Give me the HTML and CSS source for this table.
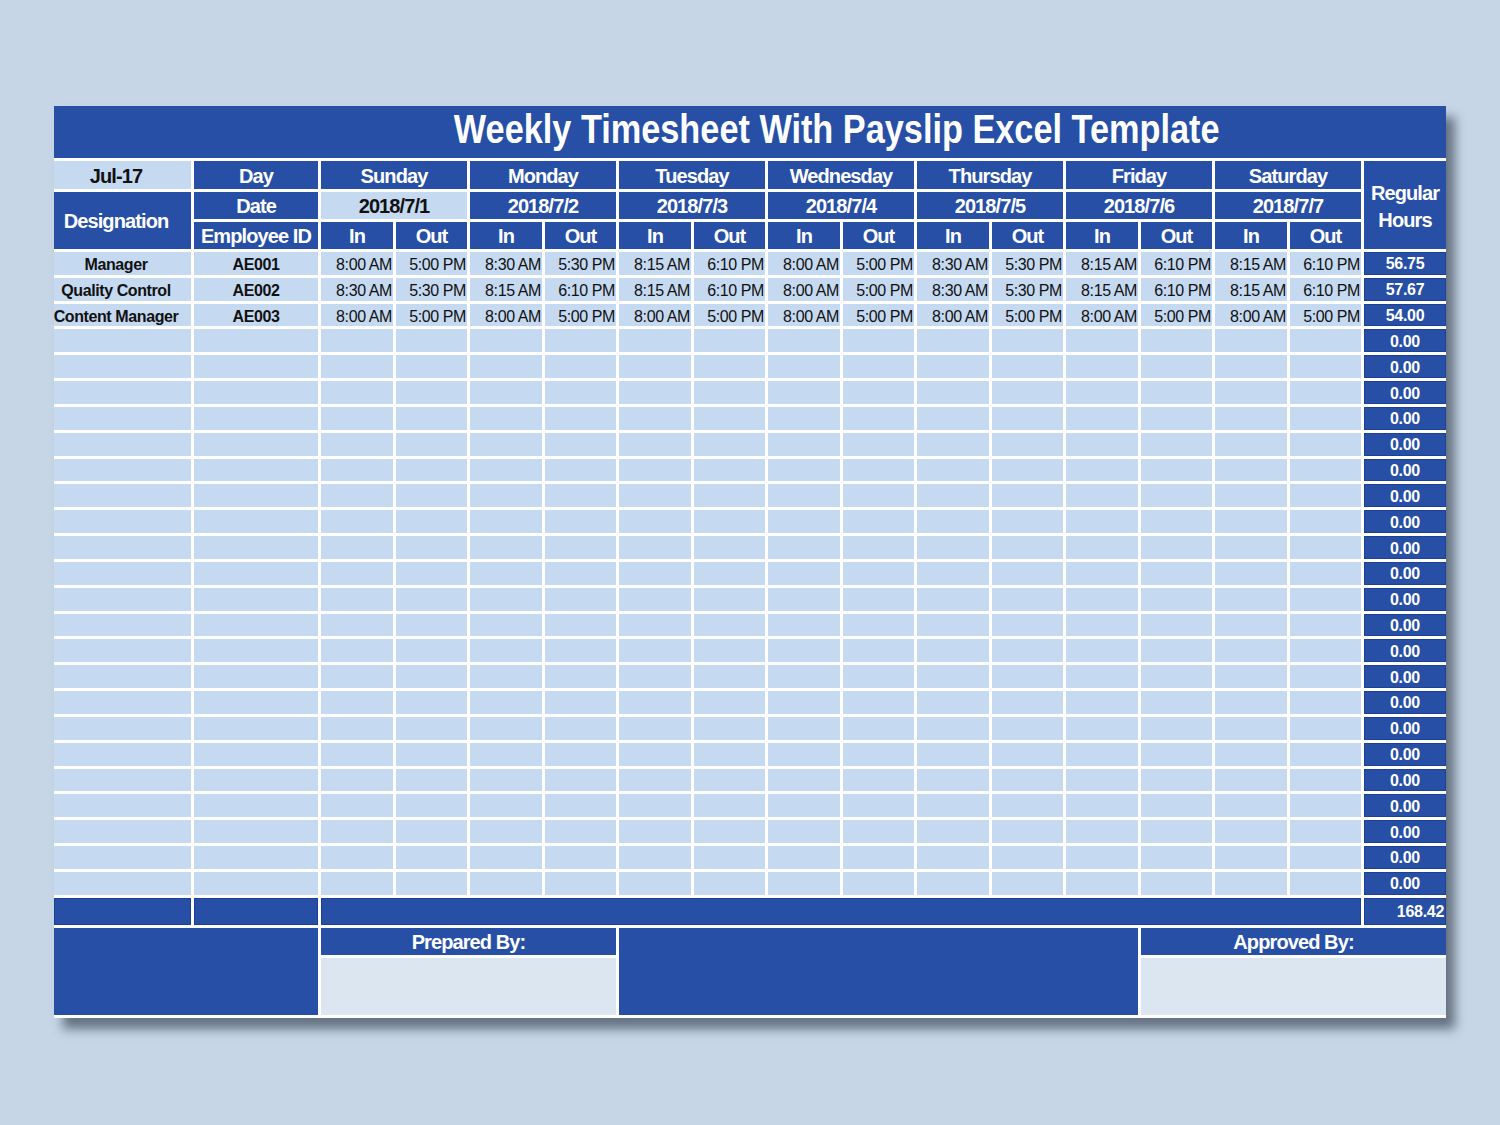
FILE: index.html
```html
<!DOCTYPE html>
<html lang="en">
<head>
<meta charset="utf-8">
<title>Weekly Timesheet With Payslip Excel Template</title>
<link rel="stylesheet" href="styles.css">
</head>
<body>
<div class="sheet">
  <div class="title"><span class="title-text">Weekly Timesheet With Payslip Excel Template</span></div>

  <div class="c lt hd colA">Jul-17</div>
  <div class="c dk hd">Day</div>
  <div class="c dk hd span2">Sunday</div>
  <div class="c dk hd span2">Monday</div>
  <div class="c dk hd span2">Tuesday</div>
  <div class="c dk hd span2">Wednesday</div>
  <div class="c dk hd span2">Thursday</div>
  <div class="c dk hd span2">Friday</div>
  <div class="c dk hd span2">Saturday</div>
  <div class="c dk hd rhead">Regular<br>Hours</div>

  <div class="c dk hd colA desig">Designation</div>
  <div class="c dk hd">Date</div>
  <div class="c lt hd span2">2018/7/1</div>
  <div class="c dk hd span2">2018/7/2</div>
  <div class="c dk hd span2">2018/7/3</div>
  <div class="c dk hd span2">2018/7/4</div>
  <div class="c dk hd span2">2018/7/5</div>
  <div class="c dk hd span2">2018/7/6</div>
  <div class="c dk hd span2">2018/7/7</div>

  <div class="c dk hd">Employee ID</div>
  <div class="c dk hd">In</div><div class="c dk hd">Out</div>
  <div class="c dk hd">In</div><div class="c dk hd">Out</div>
  <div class="c dk hd">In</div><div class="c dk hd">Out</div>
  <div class="c dk hd">In</div><div class="c dk hd">Out</div>
  <div class="c dk hd">In</div><div class="c dk hd">Out</div>
  <div class="c dk hd">In</div><div class="c dk hd">Out</div>
  <div class="c dk hd">In</div><div class="c dk hd">Out</div>

  <div class="c lt nm colA">Manager</div><div class="c lt nm">AE001</div>
  <div class="c lt tm">8:00 AM</div><div class="c lt tm">5:00 PM</div>
  <div class="c lt tm">8:30 AM</div><div class="c lt tm">5:30 PM</div>
  <div class="c lt tm">8:15 AM</div><div class="c lt tm">6:10 PM</div>
  <div class="c lt tm">8:00 AM</div><div class="c lt tm">5:00 PM</div>
  <div class="c lt tm">8:30 AM</div><div class="c lt tm">5:30 PM</div>
  <div class="c lt tm">8:15 AM</div><div class="c lt tm">6:10 PM</div>
  <div class="c lt tm">8:15 AM</div><div class="c lt tm">6:10 PM</div>
  <div class="c dk rh">56.75</div>

  <div class="c lt nm colA">Quality Control</div><div class="c lt nm">AE002</div>
  <div class="c lt tm">8:30 AM</div><div class="c lt tm">5:30 PM</div>
  <div class="c lt tm">8:15 AM</div><div class="c lt tm">6:10 PM</div>
  <div class="c lt tm">8:15 AM</div><div class="c lt tm">6:10 PM</div>
  <div class="c lt tm">8:00 AM</div><div class="c lt tm">5:00 PM</div>
  <div class="c lt tm">8:30 AM</div><div class="c lt tm">5:30 PM</div>
  <div class="c lt tm">8:15 AM</div><div class="c lt tm">6:10 PM</div>
  <div class="c lt tm">8:15 AM</div><div class="c lt tm">6:10 PM</div>
  <div class="c dk rh">57.67</div>

  <div class="c lt nm colA">Content Manager</div><div class="c lt nm">AE003</div>
  <div class="c lt tm">8:00 AM</div><div class="c lt tm">5:00 PM</div>
  <div class="c lt tm">8:00 AM</div><div class="c lt tm">5:00 PM</div>
  <div class="c lt tm">8:00 AM</div><div class="c lt tm">5:00 PM</div>
  <div class="c lt tm">8:00 AM</div><div class="c lt tm">5:00 PM</div>
  <div class="c lt tm">8:00 AM</div><div class="c lt tm">5:00 PM</div>
  <div class="c lt tm">8:00 AM</div><div class="c lt tm">5:00 PM</div>
  <div class="c lt tm">8:00 AM</div><div class="c lt tm">5:00 PM</div>
  <div class="c dk rh">54.00</div>

  <div class="c lt"></div><div class="c lt"></div><div class="c lt"></div><div class="c lt"></div><div class="c lt"></div><div class="c lt"></div><div class="c lt"></div><div class="c lt"></div><div class="c lt"></div><div class="c lt"></div><div class="c lt"></div><div class="c lt"></div><div class="c lt"></div><div class="c lt"></div><div class="c lt"></div><div class="c lt"></div><div class="c dk rh">0.00</div>
  <div class="c lt"></div><div class="c lt"></div><div class="c lt"></div><div class="c lt"></div><div class="c lt"></div><div class="c lt"></div><div class="c lt"></div><div class="c lt"></div><div class="c lt"></div><div class="c lt"></div><div class="c lt"></div><div class="c lt"></div><div class="c lt"></div><div class="c lt"></div><div class="c lt"></div><div class="c lt"></div><div class="c dk rh">0.00</div>
  <div class="c lt"></div><div class="c lt"></div><div class="c lt"></div><div class="c lt"></div><div class="c lt"></div><div class="c lt"></div><div class="c lt"></div><div class="c lt"></div><div class="c lt"></div><div class="c lt"></div><div class="c lt"></div><div class="c lt"></div><div class="c lt"></div><div class="c lt"></div><div class="c lt"></div><div class="c lt"></div><div class="c dk rh">0.00</div>
  <div class="c lt"></div><div class="c lt"></div><div class="c lt"></div><div class="c lt"></div><div class="c lt"></div><div class="c lt"></div><div class="c lt"></div><div class="c lt"></div><div class="c lt"></div><div class="c lt"></div><div class="c lt"></div><div class="c lt"></div><div class="c lt"></div><div class="c lt"></div><div class="c lt"></div><div class="c lt"></div><div class="c dk rh">0.00</div>
  <div class="c lt"></div><div class="c lt"></div><div class="c lt"></div><div class="c lt"></div><div class="c lt"></div><div class="c lt"></div><div class="c lt"></div><div class="c lt"></div><div class="c lt"></div><div class="c lt"></div><div class="c lt"></div><div class="c lt"></div><div class="c lt"></div><div class="c lt"></div><div class="c lt"></div><div class="c lt"></div><div class="c dk rh">0.00</div>
  <div class="c lt"></div><div class="c lt"></div><div class="c lt"></div><div class="c lt"></div><div class="c lt"></div><div class="c lt"></div><div class="c lt"></div><div class="c lt"></div><div class="c lt"></div><div class="c lt"></div><div class="c lt"></div><div class="c lt"></div><div class="c lt"></div><div class="c lt"></div><div class="c lt"></div><div class="c lt"></div><div class="c dk rh">0.00</div>
  <div class="c lt"></div><div class="c lt"></div><div class="c lt"></div><div class="c lt"></div><div class="c lt"></div><div class="c lt"></div><div class="c lt"></div><div class="c lt"></div><div class="c lt"></div><div class="c lt"></div><div class="c lt"></div><div class="c lt"></div><div class="c lt"></div><div class="c lt"></div><div class="c lt"></div><div class="c lt"></div><div class="c dk rh">0.00</div>
  <div class="c lt"></div><div class="c lt"></div><div class="c lt"></div><div class="c lt"></div><div class="c lt"></div><div class="c lt"></div><div class="c lt"></div><div class="c lt"></div><div class="c lt"></div><div class="c lt"></div><div class="c lt"></div><div class="c lt"></div><div class="c lt"></div><div class="c lt"></div><div class="c lt"></div><div class="c lt"></div><div class="c dk rh">0.00</div>
  <div class="c lt"></div><div class="c lt"></div><div class="c lt"></div><div class="c lt"></div><div class="c lt"></div><div class="c lt"></div><div class="c lt"></div><div class="c lt"></div><div class="c lt"></div><div class="c lt"></div><div class="c lt"></div><div class="c lt"></div><div class="c lt"></div><div class="c lt"></div><div class="c lt"></div><div class="c lt"></div><div class="c dk rh">0.00</div>
  <div class="c lt"></div><div class="c lt"></div><div class="c lt"></div><div class="c lt"></div><div class="c lt"></div><div class="c lt"></div><div class="c lt"></div><div class="c lt"></div><div class="c lt"></div><div class="c lt"></div><div class="c lt"></div><div class="c lt"></div><div class="c lt"></div><div class="c lt"></div><div class="c lt"></div><div class="c lt"></div><div class="c dk rh">0.00</div>
  <div class="c lt"></div><div class="c lt"></div><div class="c lt"></div><div class="c lt"></div><div class="c lt"></div><div class="c lt"></div><div class="c lt"></div><div class="c lt"></div><div class="c lt"></div><div class="c lt"></div><div class="c lt"></div><div class="c lt"></div><div class="c lt"></div><div class="c lt"></div><div class="c lt"></div><div class="c lt"></div><div class="c dk rh">0.00</div>
  <div class="c lt"></div><div class="c lt"></div><div class="c lt"></div><div class="c lt"></div><div class="c lt"></div><div class="c lt"></div><div class="c lt"></div><div class="c lt"></div><div class="c lt"></div><div class="c lt"></div><div class="c lt"></div><div class="c lt"></div><div class="c lt"></div><div class="c lt"></div><div class="c lt"></div><div class="c lt"></div><div class="c dk rh">0.00</div>
  <div class="c lt"></div><div class="c lt"></div><div class="c lt"></div><div class="c lt"></div><div class="c lt"></div><div class="c lt"></div><div class="c lt"></div><div class="c lt"></div><div class="c lt"></div><div class="c lt"></div><div class="c lt"></div><div class="c lt"></div><div class="c lt"></div><div class="c lt"></div><div class="c lt"></div><div class="c lt"></div><div class="c dk rh">0.00</div>
  <div class="c lt"></div><div class="c lt"></div><div class="c lt"></div><div class="c lt"></div><div class="c lt"></div><div class="c lt"></div><div class="c lt"></div><div class="c lt"></div><div class="c lt"></div><div class="c lt"></div><div class="c lt"></div><div class="c lt"></div><div class="c lt"></div><div class="c lt"></div><div class="c lt"></div><div class="c lt"></div><div class="c dk rh">0.00</div>
  <div class="c lt"></div><div class="c lt"></div><div class="c lt"></div><div class="c lt"></div><div class="c lt"></div><div class="c lt"></div><div class="c lt"></div><div class="c lt"></div><div class="c lt"></div><div class="c lt"></div><div class="c lt"></div><div class="c lt"></div><div class="c lt"></div><div class="c lt"></div><div class="c lt"></div><div class="c lt"></div><div class="c dk rh">0.00</div>
  <div class="c lt"></div><div class="c lt"></div><div class="c lt"></div><div class="c lt"></div><div class="c lt"></div><div class="c lt"></div><div class="c lt"></div><div class="c lt"></div><div class="c lt"></div><div class="c lt"></div><div class="c lt"></div><div class="c lt"></div><div class="c lt"></div><div class="c lt"></div><div class="c lt"></div><div class="c lt"></div><div class="c dk rh">0.00</div>
  <div class="c lt"></div><div class="c lt"></div><div class="c lt"></div><div class="c lt"></div><div class="c lt"></div><div class="c lt"></div><div class="c lt"></div><div class="c lt"></div><div class="c lt"></div><div class="c lt"></div><div class="c lt"></div><div class="c lt"></div><div class="c lt"></div><div class="c lt"></div><div class="c lt"></div><div class="c lt"></div><div class="c dk rh">0.00</div>
  <div class="c lt"></div><div class="c lt"></div><div class="c lt"></div><div class="c lt"></div><div class="c lt"></div><div class="c lt"></div><div class="c lt"></div><div class="c lt"></div><div class="c lt"></div><div class="c lt"></div><div class="c lt"></div><div class="c lt"></div><div class="c lt"></div><div class="c lt"></div><div class="c lt"></div><div class="c lt"></div><div class="c dk rh">0.00</div>
  <div class="c lt"></div><div class="c lt"></div><div class="c lt"></div><div class="c lt"></div><div class="c lt"></div><div class="c lt"></div><div class="c lt"></div><div class="c lt"></div><div class="c lt"></div><div class="c lt"></div><div class="c lt"></div><div class="c lt"></div><div class="c lt"></div><div class="c lt"></div><div class="c lt"></div><div class="c lt"></div><div class="c dk rh">0.00</div>
  <div class="c lt"></div><div class="c lt"></div><div class="c lt"></div><div class="c lt"></div><div class="c lt"></div><div class="c lt"></div><div class="c lt"></div><div class="c lt"></div><div class="c lt"></div><div class="c lt"></div><div class="c lt"></div><div class="c lt"></div><div class="c lt"></div><div class="c lt"></div><div class="c lt"></div><div class="c lt"></div><div class="c dk rh">0.00</div>
  <div class="c lt"></div><div class="c lt"></div><div class="c lt"></div><div class="c lt"></div><div class="c lt"></div><div class="c lt"></div><div class="c lt"></div><div class="c lt"></div><div class="c lt"></div><div class="c lt"></div><div class="c lt"></div><div class="c lt"></div><div class="c lt"></div><div class="c lt"></div><div class="c lt"></div><div class="c lt"></div><div class="c dk rh">0.00</div>
  <div class="c lt"></div><div class="c lt"></div><div class="c lt"></div><div class="c lt"></div><div class="c lt"></div><div class="c lt"></div><div class="c lt"></div><div class="c lt"></div><div class="c lt"></div><div class="c lt"></div><div class="c lt"></div><div class="c lt"></div><div class="c lt"></div><div class="c lt"></div><div class="c lt"></div><div class="c lt"></div><div class="c dk rh">0.00</div>

  <div class="c dk ol"></div>
  <div class="c dk ol"></div>
  <div class="c dk ol total-span"></div>
  <div class="c dk ol rh total">168.42</div>

  <div class="c dk foot-left"></div>
  <div class="c dk hd sign-a">Prepared By:</div>
  <div class="c dk foot-mid"></div>
  <div class="c dk hd sign-b">Approved By:</div>
  <div class="c gray sign-a"></div>
  <div class="c gray sign-b"></div>
</div>
</body>
</html>
```

FILE: styles.css
```css
html, body {
  margin: 0;
  padding: 0;
}

body {
  background: #c6d6e6;
  font-family: "Liberation Sans", Arial, sans-serif;
  width: 1500px;
  height: 1125px;
  overflow: hidden;
}

.sheet {
  margin: 106px 0 0 54px;
  width: 1392px;
  background: #ffffff;
  display: grid;
  grid-template-columns: 137px 124px repeat(7, 72px 71px) 82px;
  grid-template-rows: 52px 28px 27px 27px repeat(25, 22.84px) 27px 27px 57px;
  column-gap: 3px;
  row-gap: 3px;
  padding-bottom: 3px;
  box-shadow: 9px 11px 10px rgba(70, 82, 98, 0.75);
}

.title {
  grid-column: 1 / -1;
  background: #264fa5;
  color: #ffffff;
  text-align: center;
  padding: 0 84px 6px 258px;
  line-height: 46px;
  font-size: 40px;
  font-weight: bold;
  white-space: nowrap;
  overflow: hidden;
}

.title-text {
  display: inline-block;
  transform: scaleX(0.857);
}

.c {
  display: flex;
  align-items: center;
  justify-content: center;
  overflow: visible;
  white-space: nowrap;
  min-width: 0;
}

.lt { background: #c5d9f1; color: #111111; }
.dk { background: #264fa5; color: #ffffff; }
.gray { background: #dce6f0; }

.hd {
  font-size: 20px;
  font-weight: bold;
  letter-spacing: -0.9px;
  padding-top: 2px;
}

.lt.hd { color: #111111; }

.colA { padding-right: 13px; }

.span2 { grid-column: span 2; }

.rhead {
  grid-row: span 3;
  flex-direction: column;
  text-align: center;
  line-height: 27px;
  padding-top: 3px;
}

.desig { grid-row: span 2; }

.nm {
  font-size: 16px;
  font-weight: bold;
  letter-spacing: -0.4px;
  padding-top: 3px;
}

.tm {
  font-size: 16px;
  letter-spacing: -0.4px;
  justify-content: flex-end;
  padding-right: 1px;
  padding-top: 3px;
}

.rh {
  font-size: 16px;
  font-weight: bold;
  letter-spacing: -0.3px;
  padding-top: 2px;
  box-shadow: inset 0 0 0 1px #1d4196;
}

.ol { box-shadow: inset 0 0 0 1px #1b3f93; }

.total-span { grid-column: 3 / 17; }

.total {
  justify-content: flex-end;
  padding-right: 2px;
}

.foot-left {
  grid-column: 1 / 3;
  grid-row: span 2;
}

.foot-mid {
  grid-column: 7 / 14;
  grid-row: span 2;
}

.sign-a { grid-column: 3 / 7; }
.sign-b { grid-column: 14 / 18; }
```
